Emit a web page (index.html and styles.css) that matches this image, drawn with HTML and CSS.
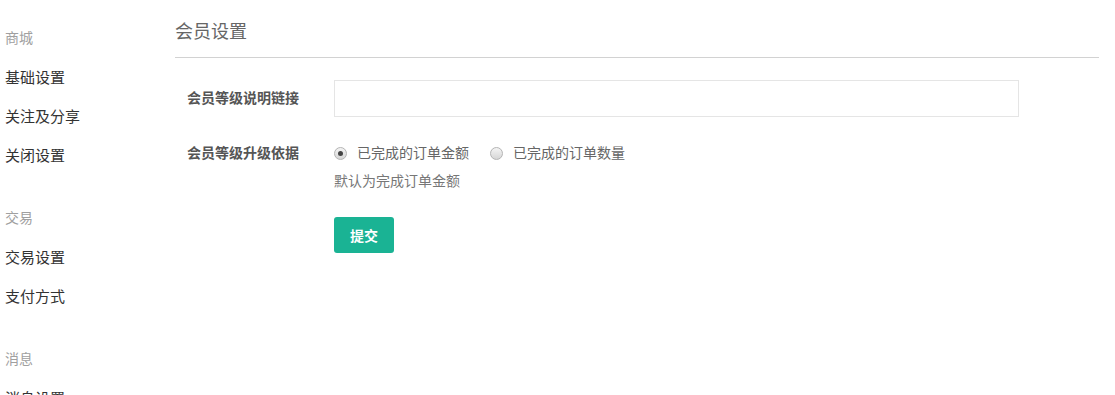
FILE: index.html
```html
<!DOCTYPE html>
<html lang="zh-CN">
<head>
<meta charset="UTF-8">
<meta name="viewport" content="width=device-width, initial-scale=1.0">
<title>会员设置</title>
<link rel="stylesheet" href="styles.css">
</head>
<body>
<div class="page">
<div class="sidebar">
<div class="nav-group">
<div class="nav-label">商城</div>
<a class="nav-item" href="#">基础设置</a>
<a class="nav-item" href="#">关注及分享</a>
<a class="nav-item" href="#">关闭设置</a>
</div>
<div class="nav-group">
<div class="nav-label">交易</div>
<a class="nav-item" href="#">交易设置</a>
<a class="nav-item" href="#">支付方式</a>
</div>
<div class="nav-group">
<div class="nav-label">消息</div>
<a class="nav-item" href="#">消息设置</a>
</div>
</div>

<div class="main">
<h1 class="page-title">会员设置</h1>
<form class="settings-form">
<div class="form-row">
<label class="form-label label-input" for="level-link">会员等级说明链接</label>
<div class="form-field">
<input type="text" id="level-link" class="text-input">
</div>
</div>
<div class="form-row">
<div class="form-label">会员等级升级依据</div>
<div class="form-field">
<div class="radio-line">
<label class="radio"><input type="radio" name="basis" checked><span>已完成的订单金额</span></label>
<label class="radio"><input type="radio" name="basis"><span>已完成的订单数量</span></label>
</div>
<div class="help-text">默认为完成订单金额</div>
<button type="submit" class="btn-submit">提交</button>
</div>
</div>
</form>
</div>
</div>
</body>
</html>
```

FILE: styles.css
```css
/* page layout */
body {
    margin: 0;
    background: #fff;
    font-family: "Liberation Sans", "Noto Sans CJK SC", sans-serif;
    color: #333;
    overflow: hidden;
}

.page {
    display: flex;
}

.sidebar {
    width: 175px;
    padding: 19px 0 0 5px;
    box-sizing: border-box;
    flex-shrink: 0;
}

.nav-group {
    margin-bottom: 24px;
}

.nav-label {
    font-size: 14px;
    line-height: 39px;
    color: #a0a0a0;
}

.nav-item {
    display: block;
    font-size: 15px;
    line-height: 39px;
    color: #333;
    text-decoration: none;
}

.main {
    width: 924px;
}

.page-title {
    margin: 20px 0 0;
    padding-bottom: 13px;
    font-size: 18px;
    line-height: 24px;
    font-weight: normal;
    color: #666;
    border-bottom: 1px solid #d2d2d2;
}

.settings-form {
    padding-top: 22px;
}

.form-row {
    display: flex;
    margin-bottom: 26px;
}

.form-label {
    width: 159px;
    padding-left: 12px;
    box-sizing: border-box;
    font-size: 14px;
    font-weight: bold;
    line-height: 20px;
    color: #555;
    flex-shrink: 0;
}

.label-input {
    line-height: 36px;
}

.text-input {
    display: block;
    width: 685px;
    height: 37px;
    box-sizing: border-box;
    border: 1px solid #e5e5e5;
    padding: 6px 12px;
    font-size: 14px;
    outline: none;
}

.radio-line {
    display: flex;
    gap: 21px;
    line-height: 20px;
}

.radio {
    display: flex;
    align-items: center;
    font-size: 14px;
    color: #666;
}

.radio input {
    appearance: none;
    -webkit-appearance: none;
    width: 13px;
    height: 13px;
    margin: 0 10px 0 0;
    border: 1px solid #b4b4b4;
    border-radius: 50%;
    background: linear-gradient(#f4f4f4, #d6d6d6);
    box-sizing: border-box;
    position: relative;
}

.radio input:checked::after {
    content: "";
    position: absolute;
    left: 3px;
    top: 3px;
    width: 5px;
    height: 5px;
    border-radius: 50%;
    background: #444;
}

.help-text {
    margin-top: 8px;
    font-size: 14px;
    line-height: 20px;
    color: #777;
}

.btn-submit {
    margin-top: 26px;
    width: 60px;
    height: 36px;
    padding: 0;
    border: none;
    border-radius: 3px;
    background: #1ab394;
    color: #fff;
    font-family: inherit;
    font-size: 14px;
    font-weight: bold;
    cursor: pointer;
}
```
